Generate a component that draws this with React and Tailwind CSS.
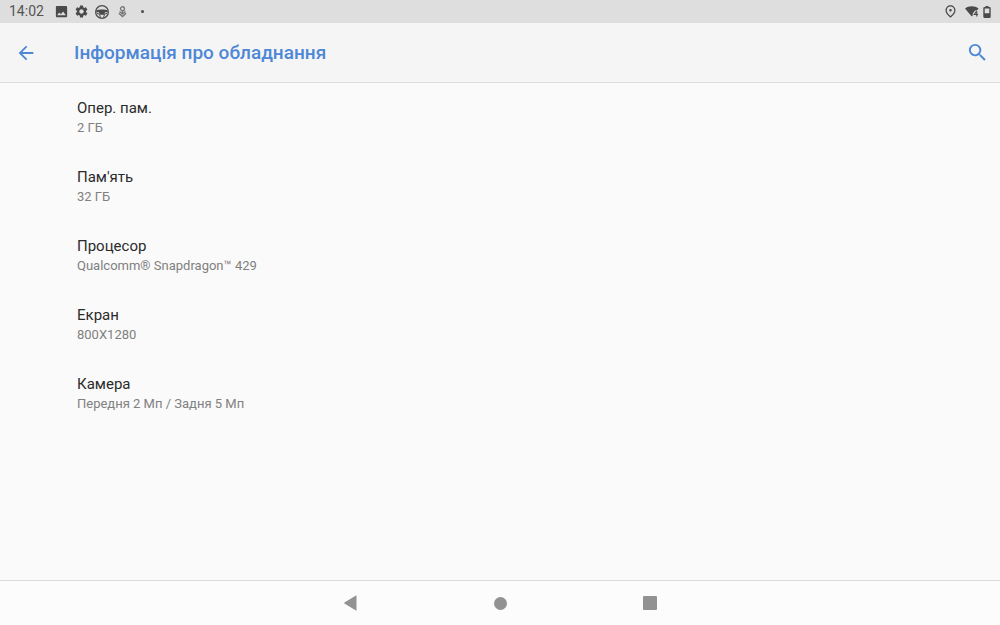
import React from "react";
import { MdArrowBack, MdImage, MdOutlinePlace, MdSearch, MdSettings } from "react-icons/md";

const specs = [
  { label: "Опер. пам.", value: "2 ГБ" },
  { label: "Пам'ять", value: "32 ГБ" },
  { label: "Процесор", value: "Qualcomm® Snapdragon™ 429" },
  { label: "Екран", value: "800X1280" },
  { label: "Камера", value: "Передня 2 Мп / Задня 5 Мп" },
];

function WheelIcon() {
  return (
    <svg viewBox="0 0 28 28" className="size-3.5" fill="none" stroke="currentColor" aria-hidden="true">
      <circle cx="14" cy="14" r="12.7" strokeWidth="2.6" />
      <path d="M2.5 10.5C8 8.5 20 8.5 25.5 10.5V14.5H20L18.5 19.5H9.5L8 14.5H2.5Z" fill="currentColor" stroke="none" />
      <path d="M4 16.5L9 18.5L11 25.5M24 16.5L19 18.5L17 25.5" strokeWidth="2" />
    </svg>
  );
}

function DownloadIcon() {
  return (
    <svg viewBox="0 0 18 24" className="h-3 w-[9px] text-[#777]" fill="none" stroke="currentColor" aria-hidden="true">
      <circle cx="9" cy="5.5" r="4" strokeWidth="2.6" />
      <path d="M9 9V16" strokeWidth="3" />
      <path d="M3 11L9 16L15 11" strokeWidth="2.6" />
      <path d="M2 14.5L9 21L16 14.5" strokeWidth="3.2" />
    </svg>
  );
}

function WifiIcon() {
  return (
    <svg viewBox="0 0 28 22" className="h-[11px] w-3.5" fill="currentColor" aria-hidden="true">
      <path d="M0 5C7-1.3 20-1.3 27 5L24 9H20L15.5 15V19L13.5 21Z" />
      <path d="M23 10.5L18.5 17H26M23.5 10.5V21" fill="none" stroke="currentColor" strokeWidth="2.2" />
    </svg>
  );
}

function BatteryIcon() {
  return (
    <svg viewBox="0 0 16 24" className="h-3 w-2" fill="none" stroke="currentColor" aria-hidden="true">
      <path d="M5 0H11V3H5Z" fill="currentColor" stroke="none" />
      <rect x="2" y="3.5" width="12" height="19" rx="1" strokeWidth="2.8" />
      <path d="M2 14.5H14V22H2Z" fill="currentColor" stroke="none" />
    </svg>
  );
}

function StatusBar() {
  return (
    <div className="flex h-[23px] items-center justify-between bg-[#dedede] px-[9px] text-[#4a4a4a]">
      <div className="flex items-center">
        <time className="w-[42px] text-sm leading-[23px] text-[#555]">14:02</time>
        <div className="grid grid-cols-[20px_20px_21px_20px_20px] place-items-center">
          <MdImage size={15} aria-hidden="true" />
          <MdSettings size={15} aria-hidden="true" />
          <WheelIcon />
          <DownloadIcon />
          <span className="size-[3px] rounded-full bg-[#4a4a4a]" />
        </div>
      </div>
      <div className="flex items-center">
        <MdOutlinePlace size={15} aria-hidden="true" />
        <span className="ml-[7px] flex items-center gap-1">
          <WifiIcon />
          <BatteryIcon />
        </span>
      </div>
    </div>
  );
}

export default function App() {
  return (
    <div className="flex min-h-screen flex-col bg-[#fafafa] font-['Roboto',sans-serif]">
      <StatusBar />
      <header className="flex h-[60px] items-center border-b border-[#dcdcdc] bg-[#f5f5f5] pr-[11px] pl-[15px] text-[#4d87d6]">
        <button type="button" aria-label="Назад" className="flex size-[22px] items-center justify-center">
          <MdArrowBack size={22} />
        </button>
        <h1 className="ml-[37px] flex-1 text-[19px] leading-6 font-medium">Інформація про обладнання</h1>
        <button type="button" aria-label="Пошук" className="flex size-6 items-center justify-center">
          <MdSearch size={23} />
        </button>
      </header>
      <main className="flex-1 pt-[15px] pl-[77px]">
        <dl className="flex flex-col gap-[30px]">
          {specs.map((s) => (
            <div key={s.label}>
              <dt className="text-[15px] leading-5 text-[#2b2b2b]">{s.label}</dt>
              <dd className="text-[13px] leading-[19px] text-[#808080]">{s.value}</dd>
            </div>
          ))}
        </dl>
      </main>
      <nav className="flex h-[45px] items-center justify-center gap-32 border-t border-[#dcdcdc] bg-[#fcfcfc] text-[#929292]">
        <button type="button" aria-label="Назад" className="flex size-[22px] items-center justify-center">
          <svg viewBox="0 0 13 16" className="h-4 w-[13px]" fill="currentColor" aria-hidden="true">
            <path d="M12.5.8V15.2Q12.5 15.8 12 15.5L.4 8.4Q0 8 .4 7.6L12 .5Q12.5.2 12.5.8Z" />
          </svg>
        </button>
        <button type="button" aria-label="Головний екран" className="flex size-[22px] items-center justify-center">
          <span className="size-[13px] rounded-full bg-[#929292]" />
        </button>
        <button type="button" aria-label="Останні програми" className="flex size-[22px] items-center justify-center">
          <span className="size-3.5 rounded-[1px] bg-[#929292]" />
        </button>
      </nav>
    </div>
  );
}
